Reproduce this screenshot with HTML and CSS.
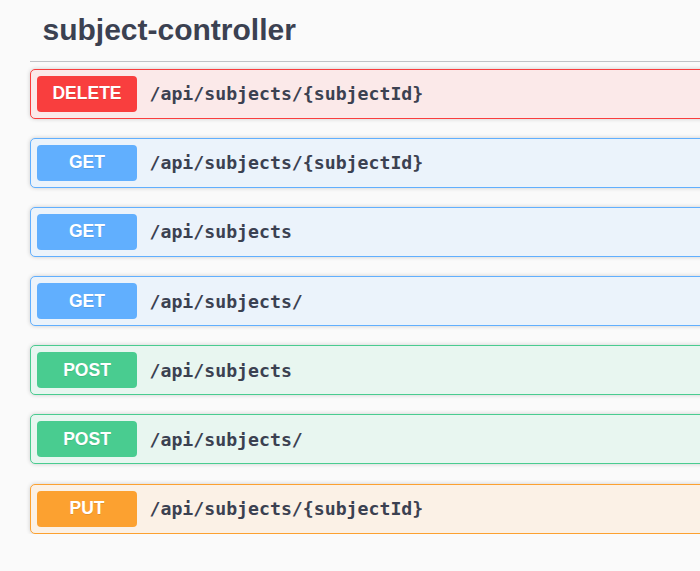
FILE: index.html
```html
<!DOCTYPE html>
<html>
<head>
<meta charset="utf-8">
<link rel="stylesheet" href="styles.css">
</head>
<body>
<div class="section">
  <h3 class="tag">subject-controller</h3>
  <div class="ops">
    <div class="op op-delete"><span class="method">DELETE</span><span class="path">/api/subjects/{subjectId}</span></div>
    <div class="op op-get"><span class="method">GET</span><span class="path">/api/subjects/{subjectId}</span></div>
    <div class="op op-get"><span class="method">GET</span><span class="path">/api/subjects</span></div>
    <div class="op op-get"><span class="method">GET</span><span class="path">/api/subjects/</span></div>
    <div class="op op-post"><span class="method">POST</span><span class="path">/api/subjects</span></div>
    <div class="op op-post"><span class="method">POST</span><span class="path">/api/subjects/</span></div>
    <div class="op op-put"><span class="method">PUT</span><span class="path">/api/subjects/{subjectId}</span></div>
  </div>
</div>
</body>
</html>
```
FILE: styles.css
```css
html, body {
  margin: 0;
  padding: 0;
  background: #fafafa;
  overflow: hidden;
}
body {
  font-family: "Liberation Sans", Arial, sans-serif;
  color: #3b4151;
}
.section {
  width: 1000px;
  padding-left: 30px;
}
.tag {
  margin: 0 0 6.5px 0;
  padding: 12.5px 25px 14px 12.5px;
  font-size: 30px;
  font-weight: 700;
  line-height: 34.5px;
  color: #3b4151;
  border-bottom: 1px solid rgba(59, 65, 81, 0.3);
}
.ops {
  display: flex;
  flex-direction: column;
  gap: 19.2px;
}
.op {
  display: flex;
  align-items: center;
  padding: 6px;
  border: 1px solid;
  border-radius: 5px;
  box-shadow: 0 0 4px rgba(0, 0, 0, 0.19);
}
.method {
  flex: none;
  width: 100px;
  height: 36px;
  display: flex;
  align-items: center;
  justify-content: center;
  border-radius: 4px;
  font-size: 17.5px;
  font-weight: 700;
  color: #fff;
  text-shadow: 0 1px 0 rgba(0, 0, 0, 0.1);
}
.path {
  padding: 0 12.5px;
  font-family: "DejaVu Sans Mono", "Liberation Mono", monospace;
  font-size: 18.2px;
  font-weight: 700;
  color: #3b4151;
}
.op-delete { background: #fbe9e9; border-color: #f93e3e; }
.op-delete .method { background: #f93e3e; }
.op-get { background: #ebf3fb; border-color: #61affe; }
.op-get .method { background: #61affe; }
.op-post { background: #e8f6f0; border-color: #49cc90; }
.op-post .method { background: #49cc90; }
.op-put { background: #fbf1e6; border-color: #fca130; }
.op-put .method { background: #fca130; }
```
